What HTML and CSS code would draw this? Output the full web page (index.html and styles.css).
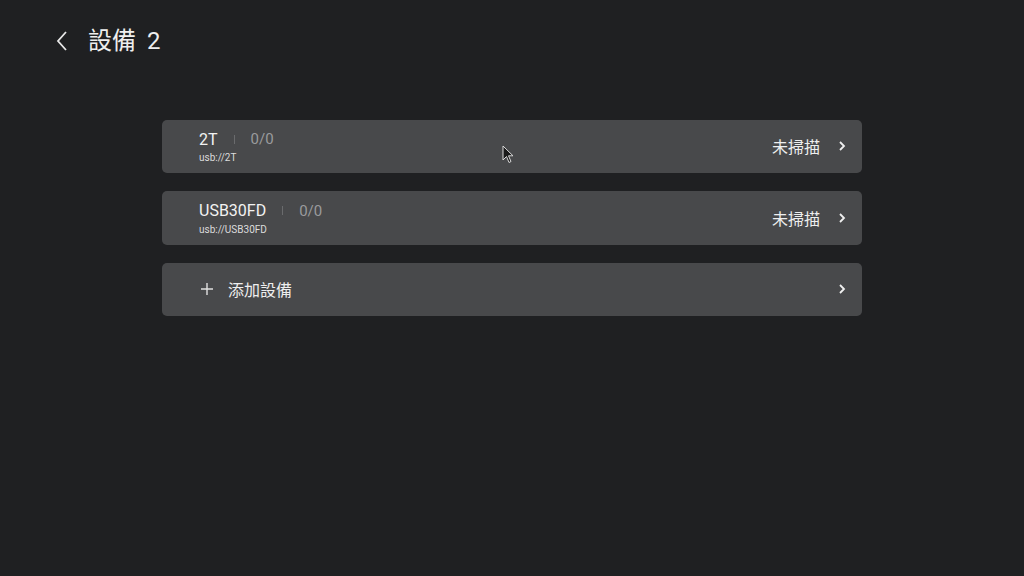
FILE: index.html
```html
<!DOCTYPE html>
<html lang="zh-Hant">
<head>
<meta charset="utf-8">
<link rel="stylesheet" href="styles.css">
</head>
<body>
<header class="header">
  <svg class="back" width="14" height="22" viewBox="0 0 14 22"><path d="M11 2 L3 11 L11 20" fill="none" stroke="#e8e8e8" stroke-width="1.8"/></svg>
  <h1 class="title">設備<span class="gapsp"></span>2</h1>
</header>
<main class="list">
  <div class="card">
    <div class="info">
      <div class="line"><span class="name">2T</span><span class="sep"></span><span class="count">0/0</span></div>
      <div class="path">usb://2T</div>
    </div>
    <span class="status">未掃描</span>
    <svg class="chev" width="8" height="12" viewBox="0 0 8 12"><path d="M2 2 L6 6 L2 10" fill="none" stroke="#f0f0f0" stroke-width="1.8"/></svg>
  </div>
  <div class="card">
    <div class="info">
      <div class="line"><span class="name">USB30FD</span><span class="sep"></span><span class="count">0/0</span></div>
      <div class="path">usb://USB30FD</div>
    </div>
    <span class="status">未掃描</span>
    <svg class="chev" width="8" height="12" viewBox="0 0 8 12"><path d="M2 2 L6 6 L2 10" fill="none" stroke="#f0f0f0" stroke-width="1.8"/></svg>
  </div>
  <div class="card">
    <div class="add">
      <svg class="plus" width="14" height="14" viewBox="0 0 14 14"><path d="M7 1 V13 M1 7 H13" stroke="#e0e0e0" stroke-width="1.4"/></svg>
      <span class="addlabel">添加設備</span>
    </div>
    <svg class="chev" width="8" height="12" viewBox="0 0 8 12"><path d="M2 2 L6 6 L2 10" fill="none" stroke="#f0f0f0" stroke-width="1.8"/></svg>
  </div>
</main>
<svg class="cursor" width="14" height="20" viewBox="0 0 14 20"><path d="M1 1 L1 15 L4.5 11.5 L7 17.5 L9 16.5 L6.5 10.8 L11 10.8 Z" fill="#1a1a1a" stroke="#d8d8d8" stroke-width="1"/></svg>
</body>
</html>
```
FILE: styles.css
```css
html, body {
  margin: 0;
  padding: 0;
  background: #1f2022;
  width: 1024px;
  height: 576px;
  overflow: hidden;
  font-family: Roboto, "Noto Sans CJK TC", sans-serif;
  color: #ececec;
  position: relative;
}
.header {
  display: flex;
  align-items: center;
  padding: 25px 0 0 55px;
  height: 32px;
}
.back {
  display: block;
}
.title {
  margin: 0 0 0 19px;
  font-size: 24px;
  font-weight: 400;
  color: #eeeeee;
  line-height: 32px;
  display: flex;
  align-items: center;
}
.gapsp {
  display: inline-block;
  width: 11px;
}
.list {
  width: 700px;
  margin: 62.5px 0 0 162px;
  display: flex;
  flex-direction: column;
  gap: 18px;
}
.card {
  height: 53.5px;
  background: #48494b;
  border-radius: 5px;
  display: flex;
  align-items: center;
  padding: 0 16px 0 37px;
  box-sizing: border-box;
}
.info {
  flex: 1;
  display: flex;
  flex-direction: column;
  padding-top: 1px;
}
.line {
  display: flex;
  align-items: center;
  height: 20px;
}
.name {
  font-size: 16px;
  color: #f2f2f2;
}
.sep {
  width: 1px;
  height: 9px;
  background: #6a6b6d;
  margin: 0 16px;
}
.count {
  font-size: 15px;
  color: #9a9b9d;
}
.path {
  font-size: 10px;
  color: #dcdcdc;
  margin-top: 3px;
  line-height: 12px;
}
.status {
  font-size: 16px;
  color: #eeeeee;
  margin-right: 18px;
}
.chev {
  display: block;
}
.add {
  flex: 1;
  display: flex;
  align-items: center;
}
.plus {
  display: block;
  margin-left: 1px;
}
.addlabel {
  margin-left: 14px;
  font-size: 16px;
  color: #eeeeee;
}
.cursor {
  position: absolute;
  left: 502px;
  top: 145px;
}
```
